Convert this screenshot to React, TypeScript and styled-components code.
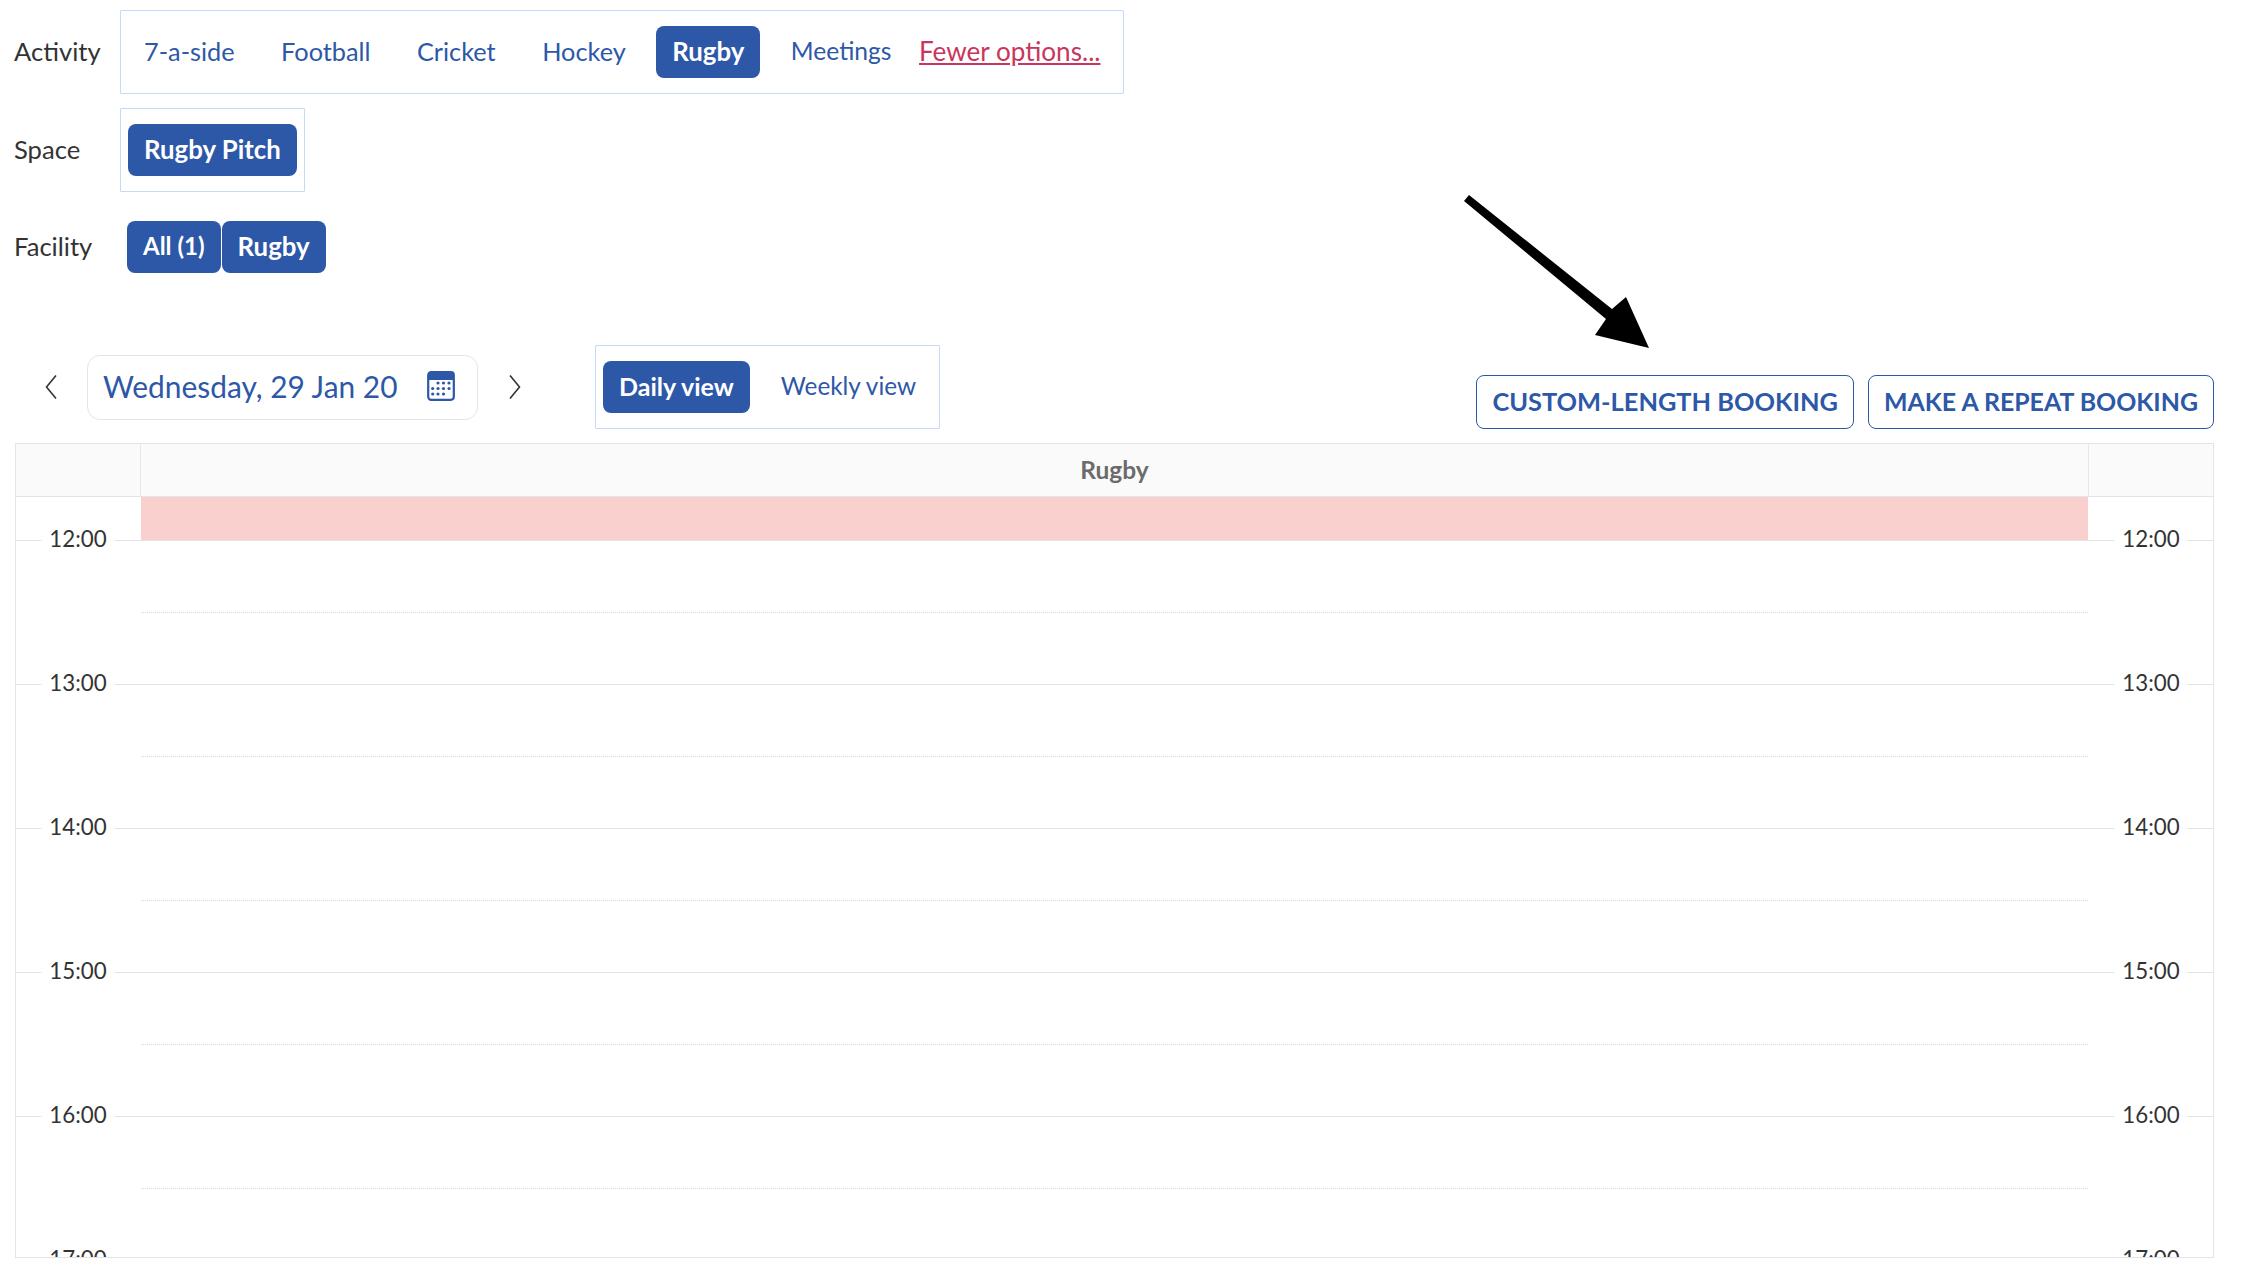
import React from "react";
import styled, { createGlobalStyle } from "styled-components";

const Global = createGlobalStyle`
  html, body { margin: 0; padding: 0; background: #fff; }
  body { font-family: "Lato", "Open Sans", sans-serif; color: #333; }
  * { box-sizing: border-box; }
`;

const Page = styled.div`
  position: relative;
  width: 2246px;
  height: 1276px;
  overflow: hidden;
  padding: 10px 32px 0 14px;
`;

const FilterRow = styled.div<{ $mb: number }>`
  display: flex;
  align-items: center;
  margin-bottom: ${(p) => p.$mb}px;
`;

const RowLabel = styled.div`
  width: 106px;
  padding-bottom: 3px;
  font-size: 25.6px;
  line-height: 30px;
  color: #333;
`;

const OptionBox = styled.div<{ $gap?: number }>`
  display: flex;
  align-items: center;
  gap: ${(p) => p.$gap ?? 14}px;
  height: 84px;
  padding: 0 7px;
  border: 1.5px solid #c3daf8;
  border-radius: 1px;
`;

const OptionButton = styled.button<{ $active?: boolean; $size?: number }>`
  height: 52px;
  padding: 0 16px 3px;
  border: 0;
  border-radius: 8px;
  font-family: inherit;
  font-size: ${(p) => p.$size ?? (p.$active ? 25.8 : 25.3)}px;
  font-weight: ${(p) => (p.$active ? 700 : 400)};
  color: ${(p) => (p.$active ? "#fff" : "#2d58a7")};
  background: ${(p) => (p.$active ? "#2d58a7" : "transparent")};
  white-space: nowrap;
`;

const FewerLink = styled.a`
  margin: 0 16px 3px -3px;
  font-size: 26.1px;
  color: #c9365c;
  text-decoration: underline;
  white-space: nowrap;
`;

const FacilityGroup = styled.div`
  display: flex;
  gap: 1px;
  margin-left: 7px;
`;

const Toolbar = styled.div`
  display: flex;
  align-items: center;
  height: 84px;
  margin-top: 72px;
`;

const Chevron = styled.button`
  display: flex;
  align-items: center;
  justify-content: center;
  width: 12px;
  height: 26px;
  padding: 0;
  border: 0;
  background: none;
`;

const PrevChevron = styled(Chevron)`
  margin-left: 31px;
`;

const DateField = styled.div`
  display: flex;
  align-items: center;
  justify-content: space-between;
  width: 391px;
  height: 65px;
  margin: 0 31px 0 30px;
  padding: 0 22px 2px 15px;
  border: 1.5px solid #e4e5ea;
  border-radius: 13px;
  font-size: 29.9px;
  color: #2d58a7;
`;

const ViewBox = styled(OptionBox)`
  margin-left: 74px;
`;

const Actions = styled.div`
  display: flex;
  gap: 14px;
  margin-left: auto;
  align-self: flex-end;
`;

const OutlineButton = styled.button<{ $size: number }>`
  height: 54px;
  padding: 0 15px 2px;
  border: 1.5px solid #2d58a7;
  border-radius: 8px;
  background: #fff;
  font-family: inherit;
  font-size: ${(p) => p.$size}px;
  font-weight: 700;
  color: #2d58a7;
  white-space: nowrap;
`;

const Calendar = styled.div`
  margin-top: 14px;
  margin-left: 1px;
  height: 815px;
  overflow: hidden;
  border: 1.5px solid #e2e4ea;
`;

const Track = styled.div`
  display: grid;
  grid-template-columns: 124px 1fr 124px;
`;

const HeaderRow = styled(Track)`
  height: 53px;
  background: #fafafa;
  border-bottom: 1.5px solid #e2e4ea;
`;

const HeaderCell = styled.div`
  display: flex;
  align-items: center;
  justify-content: center;
  padding-bottom: 2px;
  font-size: 24.5px;
  font-weight: 700;
  color: #6b6b6b;
  border-left: 1px solid #e6e7eb;
  border-right: 1px solid #e6e7eb;
`;

const EventBand = styled.div`
  height: 43px;
  margin: 0 1px;
  background: #f9d0ce;
`;

const HourRow = styled(Track)`
  height: 144px;
  border-top: 1.5px solid #e2e4ea;
`;

const Gutter = styled.div`
  position: relative;
`;

const TimeLabel = styled.span`
  position: absolute;
  left: 50%;
  top: -17px;
  transform: translateX(-50%);
  padding: 0 8px;
  background: #fff;
  font-size: 22.3px;
  line-height: 30px;
  color: #333;
`;

const HalfLine = styled.div`
  height: 72px;
  margin: 0 1px;
  border-bottom: 1px dotted #d6d8dd;
`;

const ArrowMark = styled.svg`
  position: absolute;
  left: 1460px;
  top: 190px;
`;

const CalendarIcon = () => (
  <svg width="28" height="30" viewBox="0 0 28 30" fill="none">
    <rect x="1.2" y="1.2" width="25.6" height="27.6" rx="3" stroke="#2d58a7" strokeWidth="2.2" />
    <path d="M1 4a3 3 0 0 1 3-3h20a3 3 0 0 1 3 3v5H1z" fill="#2d58a7" />
    {[
      [11, 12], [16.5, 12], [22, 12],
      [5.7, 17.5], [11, 17.5], [16.5, 17.5], [22, 17.5],
      [5.7, 23], [11, 23], [16.5, 23],
    ].map(([cx, cy]) => (
      <circle key={`${cx}-${cy}`} cx={cx} cy={cy} r="1.6" fill="#2d58a7" />
    ))}
  </svg>
);

const hours = ["12:00", "13:00", "14:00", "15:00", "16:00", "17:00"];
const activities = ["7-a-side", "Football", "Cricket", "Hockey", "Rugby", "Meetings"];

export default function App() {
  return (
    <Page>
      <Global />
      <FilterRow $mb={14}>
        <RowLabel>Activity</RowLabel>
        <OptionBox $gap={14.5}>
          {activities.map((a) => (
            <OptionButton key={a} $active={a === "Rugby"} $size={a === "Meetings" ? 24.6 : undefined}>{a}</OptionButton>
          ))}
          <FewerLink>Fewer options...</FewerLink>
        </OptionBox>
      </FilterRow>
      <FilterRow $mb={29}>
        <RowLabel>Space</RowLabel>
        <OptionBox>
          <OptionButton $active>Rugby Pitch</OptionButton>
        </OptionBox>
      </FilterRow>
      <FilterRow $mb={0}>
        <RowLabel>Facility</RowLabel>
        <FacilityGroup>
          <OptionButton $active $size={24}>All (1)</OptionButton>
          <OptionButton $active>Rugby</OptionButton>
        </FacilityGroup>
      </FilterRow>
      <Toolbar>
        <PrevChevron>
          <svg width="12" height="26" viewBox="0 0 12 26" fill="none">
            <path d="M11 1.5 1.5 13 11 24.5" stroke="#333" strokeWidth="1.6" />
          </svg>
        </PrevChevron>
        <DateField>
          Wednesday, 29 Jan 20
          <CalendarIcon />
        </DateField>
        <Chevron>
          <svg width="12" height="26" viewBox="0 0 12 26" fill="none">
            <path d="M1 1.5 10.5 13 1 24.5" stroke="#333" strokeWidth="1.6" />
          </svg>
        </Chevron>
        <ViewBox $gap={15}>
          <OptionButton $active $size={25}>Daily view</OptionButton>
          <OptionButton $size={24.3}>Weekly view</OptionButton>
        </ViewBox>
        <Actions>
          <OutlineButton $size={25.4}>CUSTOM-LENGTH BOOKING</OutlineButton>
          <OutlineButton $size={24.9}>MAKE A REPEAT BOOKING</OutlineButton>
        </Actions>
      </Toolbar>
      <Calendar>
        <HeaderRow>
          <div />
          <HeaderCell>Rugby</HeaderCell>
          <div />
        </HeaderRow>
        <Track>
          <div />
          <EventBand />
          <div />
        </Track>
        {hours.map((h) => (
          <HourRow key={h}>
            <Gutter><TimeLabel>{h}</TimeLabel></Gutter>
            <HalfLine />
            <Gutter><TimeLabel>{h}</TimeLabel></Gutter>
          </HourRow>
        ))}
      </Calendar>
      <ArrowMark width="195" height="165" viewBox="1460 190 195 165">
        <path d="M1464 201 1469 195 1612 309 1626 297 1649 348 1595 335 1606 319z" fill="#000" />
      </ArrowMark>
    </Page>
  );
}
